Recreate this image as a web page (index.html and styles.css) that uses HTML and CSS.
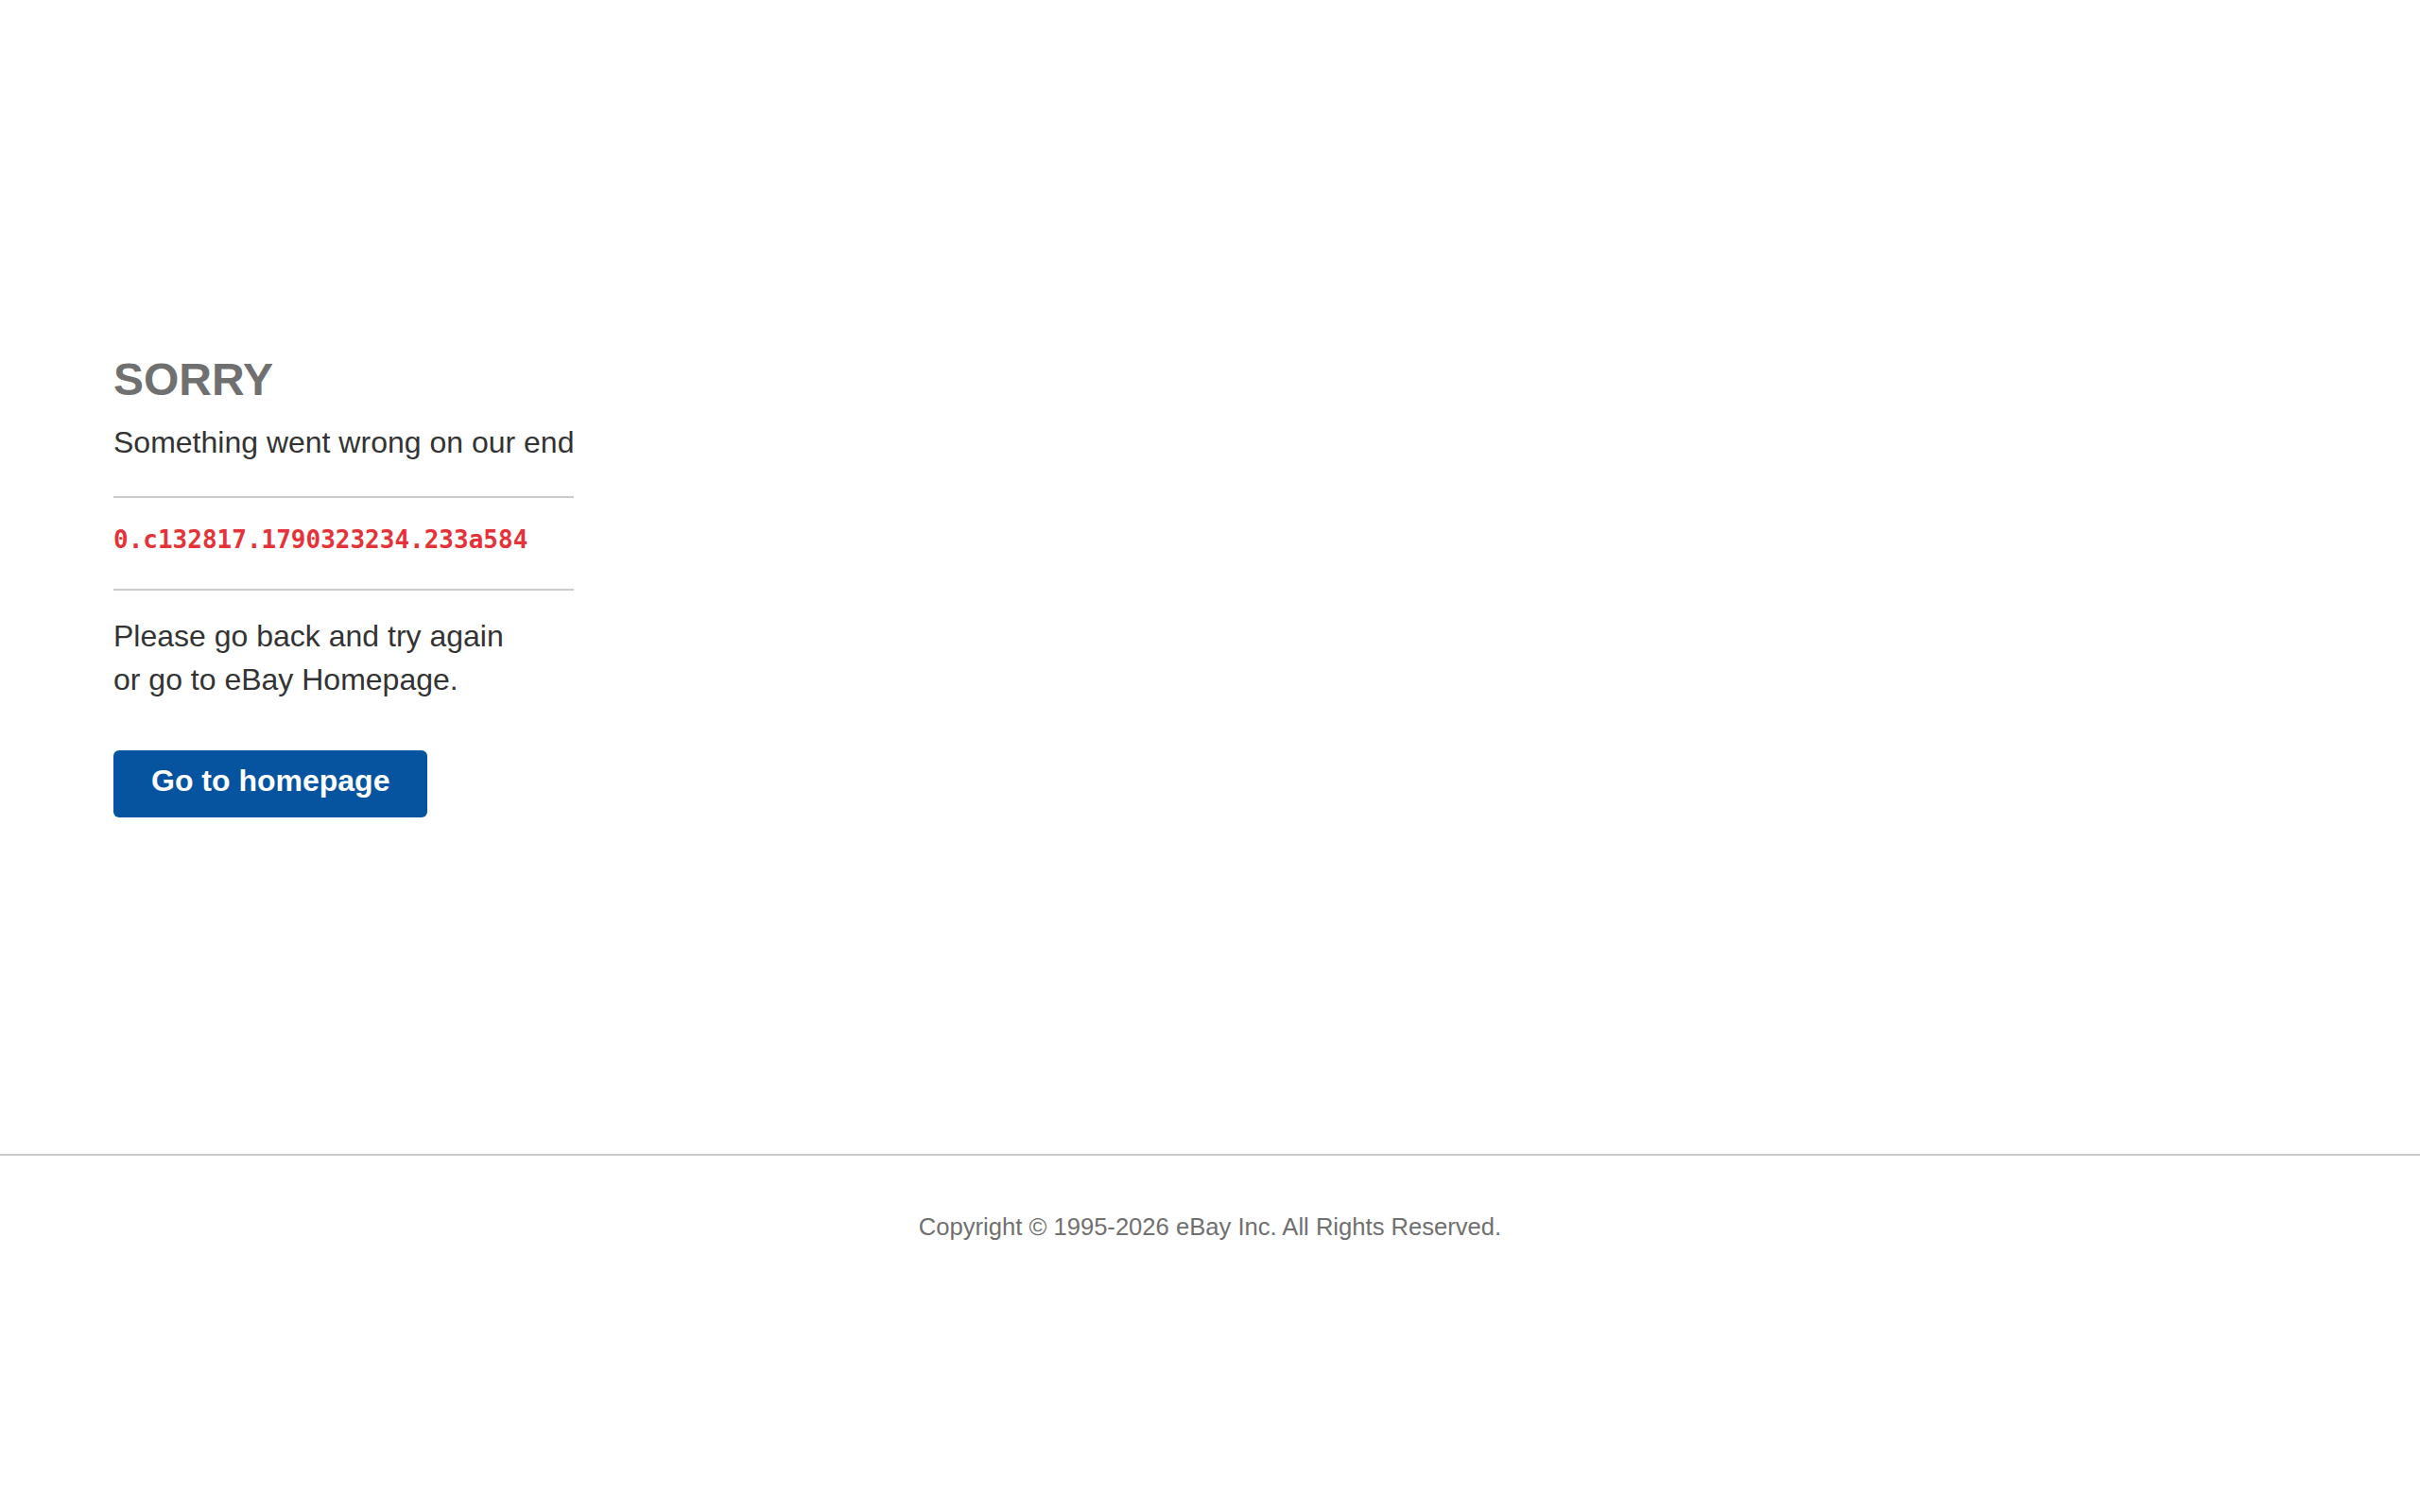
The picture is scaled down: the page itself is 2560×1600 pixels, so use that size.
FILE: index.html
```html
<!DOCTYPE html>
<html lang="en">
<head>
<meta charset="utf-8">
<title>Error Page | eBay</title>
<link rel="stylesheet" href="styles.css">
</head>
<body>
  <main class="page">
    <section class="error-box">
      <h1 class="error-title">SORRY</h1>
      <p class="error-lead">Something went wrong on our end</p>
      <div class="error-ref">
        <code class="error-code">0.c132817.1790323234.233a584</code>
      </div>
      <p class="error-help">Please go back and try again<br>or go to eBay Homepage.</p>
      <a class="btn-home" href="#">Go to homepage</a>
    </section>
  </main>
  <footer class="site-footer">
    <p class="copyright">Copyright &copy; 1995-2026 eBay Inc. All Rights Reserved.</p>
  </footer>
</body>
</html>
```

FILE: styles.css
```css
html, body {
  margin: 0;
  padding: 0;
  background: #fff;
}

body {
  font-family: "Liberation Sans", Arial, Helvetica, sans-serif;
  color: #333;
}

.page {
  box-sizing: border-box;
  min-height: 1221px;
  padding: 374px 0 0 120px;
}

/* box shrinks to its widest line so the rules match the lead text */
.error-box {
  display: inline-flex;
  flex-direction: column;
  align-items: stretch;
}

.error-title {
  margin: 0;
  font-size: 48px;
  line-height: 56px;
  font-weight: bold;
  color: #707070;
}

.error-lead {
  margin: 15px 0 0;
  font-size: 32px;
  line-height: 46px;
  white-space: nowrap;
}

.error-ref {
  margin-top: 34px;
  border-top: 2px solid #ccc;
  border-bottom: 2px solid #ccc;
  padding: 28px 0 36px;
}

.error-code {
  display: block;
  font-family: "DejaVu Sans Mono", "Liberation Mono", monospace;
  font-weight: bold;
  font-size: 26px;
  line-height: 32px;
  color: #e53238;
}

.error-help {
  margin: 25px 0 0;
  font-size: 32px;
  line-height: 46px;
}

.btn-home {
  align-self: flex-start;
  margin-top: 52px;
  padding: 13px 40px 20px;
  font-size: 32px;
  line-height: 38px;
  font-weight: bold;
  color: #fff;
  background: #0654a0;
  border-radius: 6px;
  text-decoration: none;
  white-space: nowrap;
}

.site-footer {
  border-top: 2px solid #ccc;
  padding-top: 59px;
  text-align: center;
}

.copyright {
  margin: 0;
  font-size: 25.6px;
  line-height: 32px;
  color: #707070;
}
```
